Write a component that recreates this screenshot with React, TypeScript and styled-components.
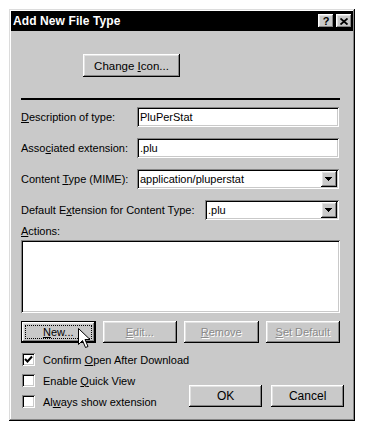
import * as React from "react";
import styled, { createGlobalStyle, css } from "styled-components";

const face = "#c9c9c9";

const GlobalStyle = createGlobalStyle`
  html, body {
    margin: 0;
    padding: 0;
    background: #fff;
  }
  body {
    font-family: "Liberation Sans", Arial, sans-serif;
    font-size: 11px;
    color: #000;
  }
`;

const raised = css`
  background: ${face};
  box-shadow: inset -1px -1px #000, inset 1px 1px #fff,
    inset -2px -2px #858585, inset 2px 2px #e2e2e2;
`;

const sunken = css`
  background: #fff;
  box-shadow: inset 1px 1px #858585, inset -1px -1px #fff,
    inset 2px 2px #000, inset -2px -2px ${face};
`;

const Page = styled.div`
  padding: 9px 0 8px 9px;
`;

const Window = styled.div`
  width: 346px;
  box-sizing: border-box;
  padding: 2px;
  background: ${face};
  box-shadow: inset -1px -1px #000, inset 1px 1px #dcdcdc,
    inset -2px -2px #858585, inset 2px 2px #fff;
`;

const TitleBar = styled.div`
  height: 20px;
  background: #000;
  color: #fff;
  display: flex;
  align-items: center;
  justify-content: space-between;
  padding: 0 1px 0 2px;
`;

const TitleText = styled.span`
  font-weight: bold;
  font-size: 12px;
  letter-spacing: 0.1px;
`;

const CaptionButtons = styled.div`
  display: flex;
  gap: 2px;
`;

const CaptionButton = styled.div`
  ${raised};
  width: 16px;
  height: 14px;
  display: flex;
  align-items: center;
  justify-content: center;
  color: #000;
  font-weight: bold;
  font-size: 11px;
  line-height: 14px;
`;

const Body = styled.div`
  padding: 23px 13px 7px 10px;
  display: flex;
  flex-direction: column;
`;

const Key = styled.span`
  text-decoration: underline;
  text-underline-offset: 1px;
`;

const Button = styled.div<{ $disabled?: boolean; $default?: boolean }>`
  ${raised};
  position: relative;
  box-sizing: border-box;
  height: 22px;
  display: flex;
  align-items: center;
  justify-content: center;
  white-space: pre;
  font-size: 11px;
  color: ${(p) => (p.$disabled ? "#8a8a8a" : "#000")};
  text-shadow: ${(p) => (p.$disabled ? "1px 1px #fff" : "none")};
  ${(p) =>
    p.$default &&
    css`
      border: 1px solid #000;
      &::after {
        content: "";
        position: absolute;
        inset: 3px;
        border: 1px dotted #000;
      }
    `}
`;

const ChangeIconButton = styled(Button)`
  width: 97px;
  height: 23px;
  margin-left: 62px;
  font-size: 11.5px;
`;

const Separator = styled.div`
  height: 2px;
  background: #000;
  margin-top: 21px;
`;

const FieldRow = styled.div<{ $first?: boolean }>`
  display: flex;
  align-items: center;
  height: 20px;
  margin-top: ${(p) => (p.$first ? 7 : 11)}px;
  margin-right: 1px;
`;

const Label = styled.label<{ $width: number }>`
  width: ${(p) => p.$width}px;
  flex: none;
  white-space: nowrap;
`;

const TextBox = styled.div`
  ${sunken};
  flex: 1;
  height: 20px;
  box-sizing: border-box;
  padding: 0 3px;
  line-height: 20px;
  white-space: nowrap;
`;

const Combo = styled.div`
  ${sunken};
  flex: 1;
  height: 20px;
  box-sizing: border-box;
  display: flex;
  align-items: center;
  padding: 2px;
`;

const ComboText = styled.span`
  flex: 1;
  padding-left: 1px;
`;

const DropButton = styled.div`
  ${raised};
  width: 16px;
  height: 16px;
  display: flex;
  align-items: center;
  justify-content: center;
`;

const ActionsLabel = styled.div`
  margin-top: 5px;
  line-height: 13px;
`;

const ListBox = styled.div`
  ${sunken};
  height: 73px;
  margin-top: 2px;
`;

const ButtonRow = styled.div`
  display: grid;
  grid-template-columns: repeat(4, 1fr);
  gap: 7px;
  margin-top: 8px;
`;

const Cursor = styled.svg`
  position: absolute;
  left: 56px;
  top: 6px;
  z-index: 2;
`;

const Bottom = styled.div`
  display: flex;
  justify-content: space-between;
  margin-top: 6px;
`;

const Checks = styled.div`
  display: flex;
  flex-direction: column;
  flex: none;
`;

const CheckRow = styled.div`
  height: 21px;
  display: flex;
  align-items: center;
  gap: 8px;
  padding-left: 1px;
  white-space: nowrap;
`;

const CheckBox = styled.div`
  ${sunken};
  width: 13px;
  height: 13px;
  flex: none;
  display: flex;
  align-items: center;
  justify-content: center;
`;

const DialogButtons = styled.div`
  display: flex;
  gap: 9px;
  align-self: flex-end;
  margin-bottom: 5px;
`;

const DialogButton = styled(Button)`
  width: 73px;
  font-size: 12px;
`;

const Arrow = () => (
  <svg width="8" height="5" viewBox="0 0 8 5" shapeRendering="crispEdges">
    <polygon points="0,0 7,0 3.5,4" fill="#000" />
  </svg>
);

const fields = [
  { label: <><Key>D</Key>escription of type:</>, value: "PluPerStat", combo: false },
  { label: <>Asso<Key>c</Key>iated extension:</>, value: ".plu", combo: false },
  { label: <>Content <Key>T</Key>ype (MIME):</>, value: "application/pluperstat", combo: true },
];

const checks = [
  { label: <>Confirm <Key>O</Key>pen After Download</>, checked: true },
  { label: <>Enable <Key>Q</Key>uick View</>, checked: false },
  { label: <>Al<Key>w</Key>ays show extension</>, checked: false },
];

const App = () => {
  return (
    <Page>
      <GlobalStyle />
      <Window>
        <TitleBar>
          <TitleText>Add New File Type</TitleText>
          <CaptionButtons>
            <CaptionButton>?</CaptionButton>
            <CaptionButton>
              <svg width="8" height="7" viewBox="0 0 8 7">
                <path d="M0.5 0.5 L7.5 6.5 M7.5 0.5 L0.5 6.5" stroke="#000" strokeWidth="1.8" />
              </svg>
            </CaptionButton>
          </CaptionButtons>
        </TitleBar>
        <Body>
          <ChangeIconButton>
            <span>
              Change <Key>I</Key>con...
            </span>
          </ChangeIconButton>
          <Separator />
          {fields.map((f, i) => (
            <FieldRow key={i} $first={i === 0}>
              <Label $width={116}>{f.label}</Label>
              {f.combo ? (
                <Combo>
                  <ComboText>{f.value}</ComboText>
                  <DropButton>
                    <Arrow />
                  </DropButton>
                </Combo>
              ) : (
                <TextBox>{f.value}</TextBox>
              )}
            </FieldRow>
          ))}
          <FieldRow>
            <Label $width={184}>
              Default E<Key>x</Key>tension for Content Type:
            </Label>
            <Combo>
              <ComboText>.plu</ComboText>
              <DropButton>
                <Arrow />
              </DropButton>
            </Combo>
          </FieldRow>
          <ActionsLabel>
            <Key>A</Key>ctions:
          </ActionsLabel>
          <ListBox />
          <ButtonRow>
            <Button $default>
              <span>
                <Key>N</Key>ew...
              </span>
              <Cursor width="13" height="21" viewBox="0 0 13 21">
                <path
                  d="M0.5 0.5 L0.5 16.5 L4.5 12.5 L7.5 19.5 L10 18.5 L7 11.5 L12 11.5 Z"
                  fill="#fff"
                  stroke="#000"
                  strokeWidth="1"
                />
              </Cursor>
            </Button>
            <Button $disabled>
              <span>
                <Key>E</Key>dit...
              </span>
            </Button>
            <Button $disabled>
              <span>
                <Key>R</Key>emove
              </span>
            </Button>
            <Button $disabled>
              <span>
                <Key>S</Key>et Default
              </span>
            </Button>
          </ButtonRow>
          <Bottom>
            <Checks>
              {checks.map((c, i) => (
                <CheckRow key={i}>
                  <CheckBox>
                    {c.checked && (
                      <svg width="9" height="9" viewBox="0 0 9 9">
                        <polyline points="1,4 3.5,6.5 8,1.5" fill="none" stroke="#000" strokeWidth="2" />
                      </svg>
                    )}
                  </CheckBox>
                  <span>{c.label}</span>
                </CheckRow>
              ))}
            </Checks>
            <DialogButtons>
              <DialogButton>OK</DialogButton>
              <DialogButton>Cancel</DialogButton>
            </DialogButtons>
          </Bottom>
        </Body>
      </Window>
    </Page>
  );
};

export default App;
